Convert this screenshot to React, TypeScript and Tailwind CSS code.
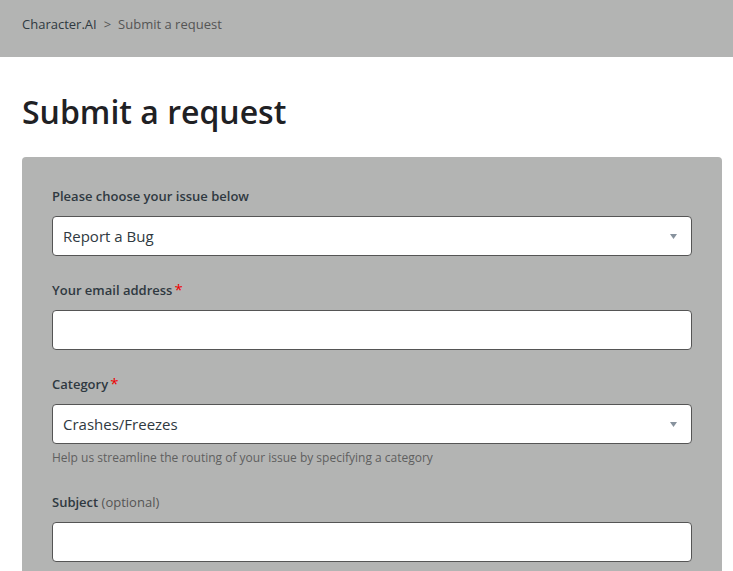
const font = { fontFamily: '"Open Sans", "Noto Sans", sans-serif' };

function Caret() {
  return (
    <svg width="7" height="5" viewBox="0 0 7 5" className="shrink-0">
      <path d="M0 0 L7 0 L3.5 5 Z" fill="#87929d" />
    </svg>
  );
}

function Label({ text, required, optional }: { text: string; required?: boolean; optional?: boolean }) {
  return (
    <label className="block text-[13px] leading-5 font-semibold text-[#2f3941] mb-[10px]">
      {text}
      {required && <span className="text-[#e00] ml-[2px] font-normal text-[15px] leading-none">*</span>}
      {optional && <span className="font-normal text-[#555]"> (optional)</span>}
    </label>
  );
}

function Select({ value }: { value: string }) {
  return (
    <div className="flex items-center justify-between h-10 rounded-[4px] border border-[#555] bg-white pl-[10px] pr-[14px]">
      <span className="text-[15px] text-[#2f3941]">{value}</span>
      <Caret />
    </div>
  );
}

function TextInput() {
  return <div className="h-10 rounded-[4px] border border-[#555] bg-white" />;
}

export default function App() {
  return (
    <div className="min-h-screen bg-white" style={font}>
      <div className="h-[57px] bg-[#b3b4b3] flex items-center px-[22px] pb-[8px] text-[13px]">
        <span className="text-[#2f3941]">Character.AI</span>
        <span className="text-[#555] mx-[7px]">&gt;</span>
        <span className="text-[#555]">Submit a request</span>
      </div>

      <div className="px-[22px]">
        <h1 className="text-[32px] font-semibold text-[#1f2124] leading-none mt-[39px] mb-[29px]">
          Submit a request
        </h1>

        <div className="w-[700px] bg-[#b3b4b3] rounded-t-[4px] px-[30px] pt-[29px] pb-10">
          <div className="mb-6">
            <Label text="Please choose your issue below" />
            <Select value="Report a Bug" />
          </div>
          <div className="mb-6">
            <Label text="Your email address" required />
            <TextInput />
          </div>
          <div className="mb-6">
            <Label text="Category" required />
            <Select value="Crashes/Freezes" />
            <p className="text-[12px] leading-5 text-[#5f5f5f] mt-1">
              Help us streamline the routing of your issue by specifying a category
            </p>
          </div>
          <div className="mt-[18px]">
            <Label text="Subject" optional />
            <TextInput />
          </div>
        </div>
      </div>
    </div>
  );
}
